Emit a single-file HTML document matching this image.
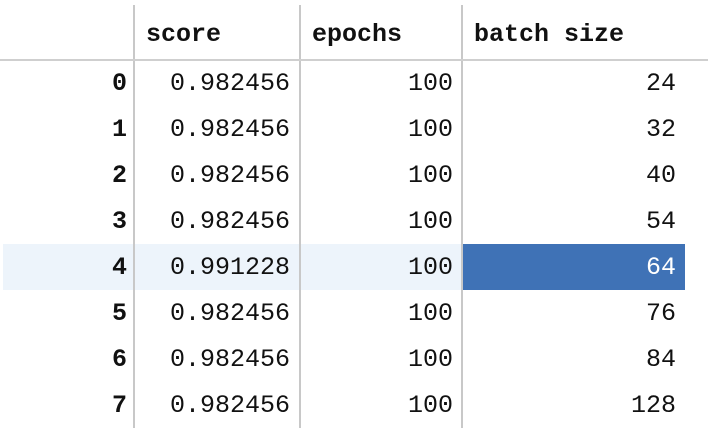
<!DOCTYPE html><html><head><style>
body{margin:0;width:708px;height:448px;background:#fff;position:relative;overflow:hidden;font-family:"Liberation Mono",monospace;font-size:25px;color:#111}
.v{position:absolute;top:5px;height:423px;width:2px;background:#c8c8c8}
.h{position:absolute;left:0;top:59px;width:708px;height:2px;background:#cfcfcf}
.t{position:absolute;line-height:46px;height:46px;white-space:pre}
.r{text-align:right}
.b{font-weight:bold}
</style></head><body>
<div style="position:absolute;left:3px;top:244px;width:459px;height:46px;background:#edf4fb"></div>
<div style="position:absolute;left:463px;top:244px;width:222px;height:46px;background:#3f72b6"></div>
<div class="v" style="left:133px"></div><div class="v" style="left:299px"></div><div class="v" style="left:461px"></div>
<div class="h"></div>
<div class="t b" style="left:146px;top:12px">score</div>
<div class="t b" style="left:312px;top:12px">epochs</div>
<div class="t b" style="left:474px;top:12px">batch size</div>
<div id="rows"></div>
<script>
var d=[24,32,40,54,64,76,84,128],h='';
for(var i=0;i<8;i++){var y=61+i*46;var s=i==4?'0.991228':'0.982456';
h+='<div class="t r b" style="left:0;width:127px;top:'+y+'px">'+i+'</div>';
h+='<div class="t r" style="left:134px;width:156px;top:'+y+'px">'+s+'</div>';
h+='<div class="t r" style="left:300px;width:153px;top:'+y+'px">100</div>';
h+='<div class="t r" style="left:462px;width:214px;top:'+y+'px;'+(i==4?'color:#fff':'')+'">'+d[i]+'</div>';}
document.getElementById('rows').innerHTML=h;
</script>
</body></html>
